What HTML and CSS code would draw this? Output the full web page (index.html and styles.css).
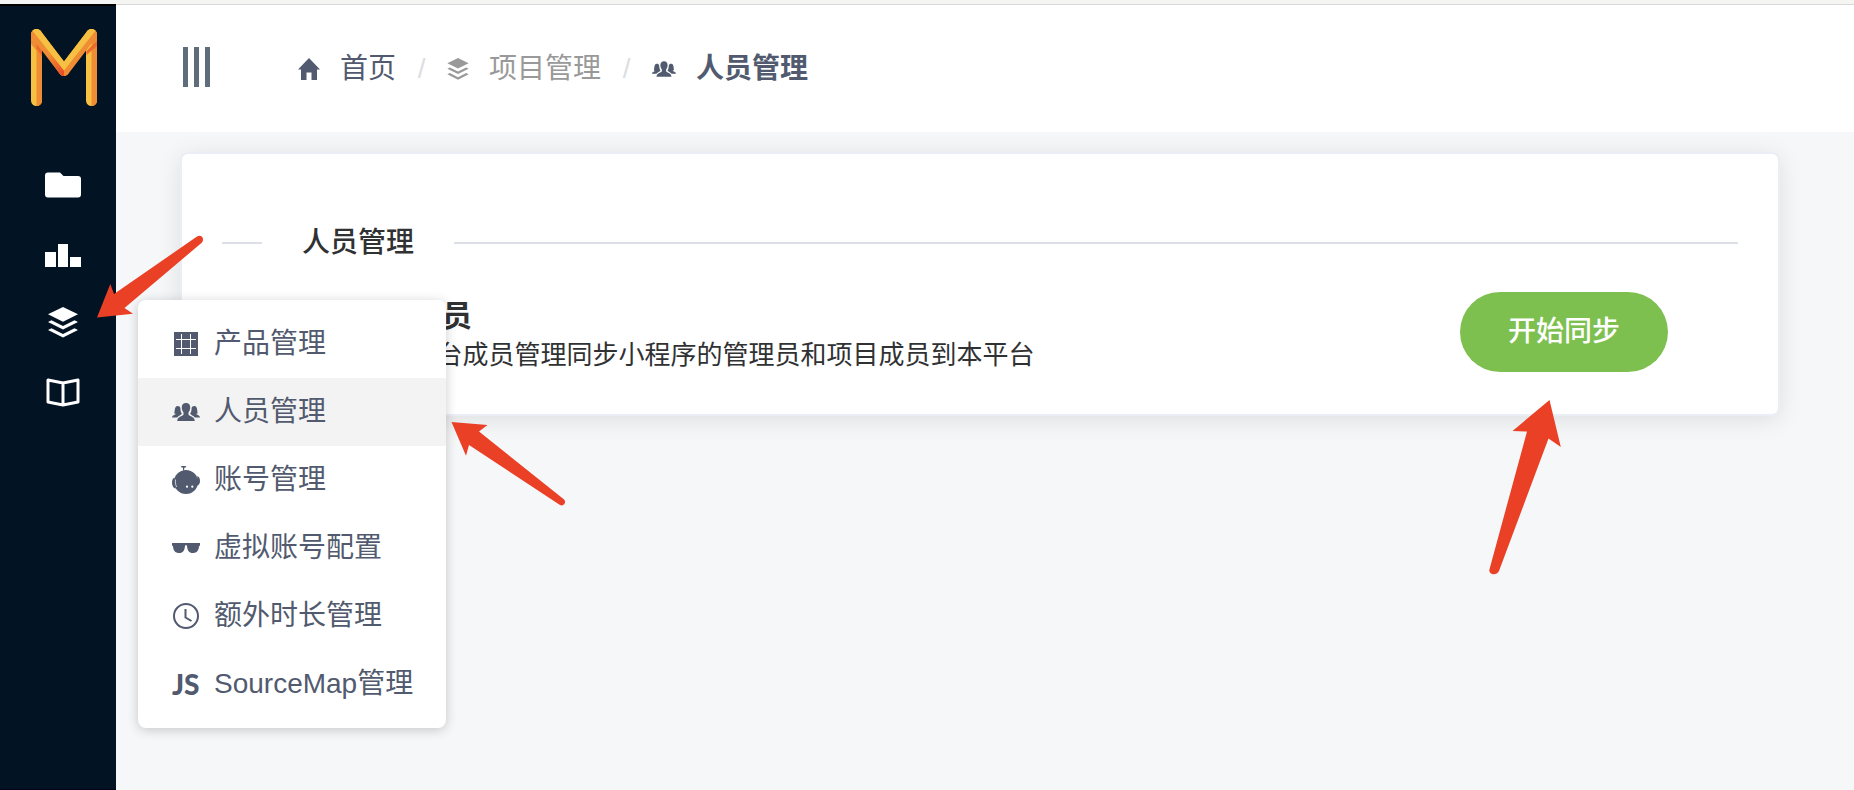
FILE: index.html
```html
<!DOCTYPE html>
<html lang="zh-CN">
<head>
  <meta charset="UTF-8">
  <meta name="viewport" content="width=device-width, initial-scale=1.0">
  <title>人员管理</title>
  <link rel="stylesheet" href="styles.css">
</head>
<body>
  <!-- shared icon shapes -->
  <svg class="sprite" aria-hidden="true">
    <symbol id="icon-layers" viewBox="0 0 30 31">
      <path d="M15 0L30 7.300L15 14.800L0 7.300z"/>
      <path d="M0 15l3.500-1.700L15 19l11.500-5.700L30 15l-15 7.600z"/>
      <path d="M0 23l3.500-1.700L15 27l11.500-5.700L30 23l-15 7.600z"/>
    </symbol>
    <symbol id="icon-people" viewBox="0 0 28 18">
      <path d="M14 0c2.900 0 4.400 1.900 4.200 4.800-.1 2.200-.9 3.500-1.700 4.600v2.200c0 1.400 5.900 1.700 6.300 6.400H5.200c.4-4.700 6.300-5 6.300-6.400V9.400c-.8-1.100-1.600-2.400-1.700-4.600C9.600 1.900 11.100 0 14 0z"/>
      <path d="M5.600 3c1.600 0 2.500.7 2.800 2 0 2.800.6 4.400 1.500 5.700-.8 1.300-3.400 1.800-4.700 3.800H0c.2-2.600 3.500-2.500 3.700-3.500 0-.6-1.200-.3-1.500-.7C3 9 2.100 3 5.600 3z"/>
      <path d="M22.400 3c-1.600 0-2.500.7-2.800 2 0 2.800-.6 4.400-1.500 5.700.8 1.300 3.400 1.800 4.700 3.800H28c-.2-2.600-3.500-2.500-3.700-3.500 0-.6 1.200-.3 1.500-.7C25 9 25.900 3 22.400 3z"/>
    </symbol>
  </svg>

  <div class="topline"></div>

  <div class="layout">
    <aside class="sidebar">
      <a class="logo" href="#" aria-label="首页">
        <svg width="66" height="78" viewBox="0 0 66 78">
          <defs>
            <linearGradient id="fold" gradientUnits="userSpaceOnUse" x1="20" y1="25" x2="33" y2="43">
              <stop offset="0" stop-color="#f08c33"/>
              <stop offset="1" stop-color="#ea4f28"/>
            </linearGradient>
          </defs>
          <path d="M5.500 5.500V71.500M60.500 5.500V71.500" fill="none" stroke="#f6c143" stroke-width="11" stroke-linecap="round"/>
          <path d="M5.500 15H11V71.500A5.500 5.500 0 0 1 5.500 77zM60.500 5H66V71.500A5.500 5.500 0 0 1 60.500 77z" fill="#f08c33"/>
          <path d="M60.500 5.500L33 41.500" fill="none" stroke="#f08c33" stroke-width="11" stroke-linecap="round"/>
          <path d="M5.500 5.500L33 41.500" fill="none" stroke="#f08c33" stroke-width="11" stroke-linecap="round"/>
          <path d="M0 5.500V15L6 22V15z" fill="#f08c33"/>
          <path d="M33 41.500L20 24.500L11.600 19.500L28.600 44.800C30 46.500 31.500 47 33 47z" fill="url(#fold)"/>
          <path d="M1.500 1.800C4-.8 7.500-.6 9.900 2.200L33 32.400V41.500z" fill="#f6c143"/>
          <path d="M64.500 1.800C62-.8 58.500-.6 56.100 2.200L33 32.400V41.500z" fill="#f6c143"/>
          <path d="M5.500 15L11 22V27L5.500 20zM66 12V17L55.500 26V22z" fill="#ee6a2c"/>
        </svg>
      </a>
      <nav class="side-nav">
        <a class="side-item" href="#" aria-label="项目">
          <svg width="36" height="36" viewBox="0 0 36 36"><path d="M3 5.500h12l3.500 3.500H33a3 3 0 0 1 3 3v15.500a3 3 0 0 1-3 3H3a3 3 0 0 1-3-3V8.500a3 3 0 0 1 3-3z"/></svg>
        </a>
        <a class="side-item" href="#" aria-label="统计">
          <svg width="36" height="36" viewBox="0 0 36 36"><path d="M0 16h11v15H0zM13 8h10v23H13zM25 21h11v10H25z"/></svg>
        </a>
        <a class="side-item" href="#" aria-label="项目管理">
          <svg width="30" height="31"><use href="#icon-layers"/></svg>
        </a>
        <a class="side-item" href="#" aria-label="文档">
          <svg width="34" height="34" viewBox="0 0 34 34"><path d="M2 5L17 8L32 5V27L17 30L2 27zM17 8V30" fill="none" stroke="#fff" stroke-width="3" stroke-linejoin="round"/></svg>
        </a>
      </nav>

      <div class="submenu">
        <a class="submenu-item" href="#">
          <svg class="submenu-icon" viewBox="0 0 28 28"><path d="M2 2h24v24H2z"/><path d="M9.500 4v20M18.500 4v20M4 9.500h20M4 18.500h20" fill="none" stroke="#fff" stroke-width="1"/></svg>
          产品管理
        </a>
        <a class="submenu-item active" href="#">
          <svg class="submenu-icon" viewBox="0 -5 28 28"><use href="#icon-people" width="28" height="18"/></svg>
          人员管理
        </a>
        <a class="submenu-item" href="#">
          <svg class="submenu-icon" viewBox="0 0 28 28">
            <circle cx="14" cy="16" r="12"/>
            <path d="M2.600 11.500C.8 12 0 14 0 16.500s1 5.500 3.600 6zM25.400 10c1.800.5 2.600 2.500 2.600 5s-1 4.500-3.600 5z"/>
            <path d="M11 .5h1.200v4H11z"/>
            <ellipse cx="11.600" cy=".8" rx="2.600" ry="1"/>
            <path d="M3.600 13.500c-.5 2-.2 5 1 7.500" fill="none" stroke="#fff" stroke-width=".7"/>
            <circle cx="15" cy="20.700" r="1.100" fill="#fff"/>
            <circle cx="20.300" cy="20.700" r="1.100" fill="#fff"/>
          </svg>
          账号管理
        </a>
        <a class="submenu-item" href="#">
          <svg class="submenu-icon" viewBox="0 0 28 28"><path d="M0 9h28v2.500l-1 .8c-.3 4.500-2.300 6.700-5.500 6.700h-1c-3.200 0-5.200-2.500-5.500-7.300l-1-.6-1 .6c-.3 4.800-2.300 7.300-5.500 7.300h-1C3.300 19 1.300 16.800 1 12.300L0 11.500z"/></svg>
          虚拟账号配置
        </a>
        <a class="submenu-item" href="#">
          <svg class="submenu-icon" viewBox="0 0 28 28"><path d="M13.500 7v8.500l6 3.500" fill="none" stroke="#515a6e" stroke-width="2"/><circle cx="14" cy="14" r="12" fill="none" stroke="#515a6e" stroke-width="2"/></svg>
          额外时长管理
        </a>
        <a class="submenu-item" href="#">
          <span class="submenu-icon js-icon">JS</span>
          SourceMap管理
        </a>
      </div>
    </aside>

    <div class="content">
      <header class="header">
        <button class="collapse" type="button" aria-label="收起菜单"><i></i><i></i><i></i></button>
        <nav class="breadcrumb">
          <a class="crumb" href="#">
            <svg width="22" height="22" viewBox="0 0 22 22"><path d="M11 0L22 11.500H19V22H13.500V14.500H8.500V22H3V11.500H0z"/></svg>
            首页
          </a>
          <span class="slash">/</span>
          <a class="crumb muted" href="#">
            <svg width="22" height="22"><use href="#icon-layers"/></svg>
            项目管理
          </a>
          <span class="slash">/</span>
          <a class="crumb current" href="#">
            <svg width="24" height="22"><use href="#icon-people"/></svg>
            人员管理
          </a>
        </nav>
      </header>

      <main class="main">
        <section class="card">
          <h2 class="divider"><span>人员管理</span></h2>
          <div class="sync-row">
            <div class="sync-info">
              <h3 class="sync-title">同步项目成员</h3>
              <p class="sync-desc">通过 微信 平台成员管理同步小程序的管理员和项目成员到本平台</p>
            </div>
            <button class="sync-btn" type="button">开始同步</button>
          </div>
        </section>
      </main>
    </div>
  </div>

  <!-- guide arrows -->
  <svg class="arrow arrow-menu" width="108" height="84" viewBox="0 0 108 84"><path d="M0 82.500L13.300 49L17 59L100 1.500C104-1 108 3.500 105 7.500L27.500 73L36 78.700z"/></svg>
  <svg class="arrow arrow-item" width="115" height="86" viewBox="0 0 115 86"><path d="M.5 2L36.500 5L28 11.500L112.500 79C116 82 113 87 109 85L18 25L15 35.700z"/></svg>
  <svg class="arrow arrow-sync" width="74" height="176" viewBox="0 0 74 176"><path d="M61.500 0L72.800 47L60.500 38.500L11 171C8.500 176 1 175 1.300 170L39 31.500L24.500 31z"/></svg>
</body>
</html>
```

FILE: styles.css
```css
:root {
  --side-bg: #021424;
  --page-bg: #f5f7f9;
  --text: #303133;
  --menu-text: #515a6e;
  --line: #dcdfe6;
  --green: #7ec050;
  --arrow: #ea4025;
}

* {
  box-sizing: border-box;
}

body {
  margin: 0;
  min-height: 100vh;
  display: flex;
  flex-direction: column;
  position: relative;
  background: var(--page-bg);
  color: var(--text);
  font-family: "Liberation Sans", "Noto Sans CJK SC", sans-serif;
  font-size: 28px;
  line-height: 42px;
}

a {
  color: inherit;
  text-decoration: none;
}

button {
  border: none;
  font-family: inherit;
  cursor: pointer;
}

svg {
  fill: currentColor;
  flex-shrink: 0;
}

.sprite {
  position: absolute;
  width: 0;
  height: 0;
}

.topline {
  height: 4px;
  background: #f4f4f2;
}

.layout {
  flex: 1;
  display: flex;
}

/* sidebar */
.sidebar {
  position: relative;
  width: 116px;
  flex-shrink: 0;
  background: var(--side-bg);
  border-top: 2px solid #000;
  border-bottom: 1px solid #080218;
  color: #fff;
}

.logo {
  display: block;
  padding: 23px 0 0 31px;
}

.logo svg {
  display: block;
}

.side-nav {
  padding: 43px 0 0 10px;
}

.side-item {
  display: flex;
  align-items: center;
  justify-content: center;
  height: 69px;
}

.submenu {
  position: absolute;
  left: 138px;
  top: 294px;
  z-index: 2;
  width: 308px;
  padding: 10px 0;
  background: #fff;
  border-radius: 8px;
  box-shadow: 0 2px 12px rgba(0, 0, 0, 0.2);
  color: var(--menu-text);
}

.submenu-item {
  display: flex;
  align-items: center;
  gap: 14px;
  height: 68px;
  padding-left: 34px;
  white-space: nowrap;
}

.submenu-item.active,
.submenu-item:hover {
  background: #f3f3f3;
}

.submenu-icon {
  width: 28px;
  height: 28px;
  flex-shrink: 0;
}

.js-icon {
  font-family: Lato, sans-serif;
  font-weight: 900;
  line-height: 28px;
}

/* header */
.content {
  flex: 1;
  min-width: 0;
}

.header {
  display: flex;
  align-items: center;
  height: 128px;
  padding-left: 67px;
  background: #fff;
  border-top: 1px solid #d8d8d8;
}

.collapse {
  display: flex;
  gap: 6px;
  padding: 0;
  margin: 0 88px 4px 0;
  background: none;
}

.collapse i {
  width: 5px;
  height: 40px;
  background: #5f6d7a;
}

.breadcrumb {
  display: flex;
  align-items: center;
  color: var(--menu-text);
}

.crumb {
  display: flex;
  align-items: center;
  gap: 20px;
}

.crumb.muted {
  color: #999;
}

.crumb.current {
  font-weight: bold;
}

.slash {
  width: 51px;
  text-align: center;
  color: #dcdee2;
}

/* card */
.main {
  padding: 20px 74px 20px 64px;
}

.card {
  padding: 40px;
  background: #fff;
  border: 2px solid #ebeef5;
  border-radius: 8px;
  box-shadow: 0 4px 24px rgba(0, 0, 0, 0.1);
}

.divider {
  display: flex;
  align-items: center;
  height: 2px;
  margin: 48px 0;
  font-size: 28px;
  font-weight: 500;
}

.divider::before,
.divider::after {
  content: "";
  width: 40px;
  height: 2px;
  background: var(--line);
}

.divider::after {
  flex: 1;
}

.divider span {
  padding: 0 40px;
}

.sync-row {
  display: flex;
  align-items: flex-start;
  justify-content: space-between;
  padding: 0 70px;
}

.sync-info {
  padding-top: 4px;
}

.sync-title {
  margin: 0;
  font-size: 30px;
  font-weight: bold;
  line-height: 40px;
}

.sync-desc {
  margin: 0;
  font-size: 26px;
  line-height: 38px;
}

.sync-btn {
  height: 80px;
  padding: 0 48px;
  border-radius: 40px;
  background: var(--green);
  color: #fff;
  font-size: 28px;
  font-weight: 500;
  line-height: 42px;
}

/* guide arrows lie over the page */
.arrow {
  position: absolute;
  z-index: 3;
  fill: var(--arrow);
  pointer-events: none;
}

.arrow-menu {
  left: 97px;
  top: 235px;
}

.arrow-item {
  left: 451px;
  top: 420px;
}

.arrow-sync {
  left: 1488px;
  top: 400px;
}
```
